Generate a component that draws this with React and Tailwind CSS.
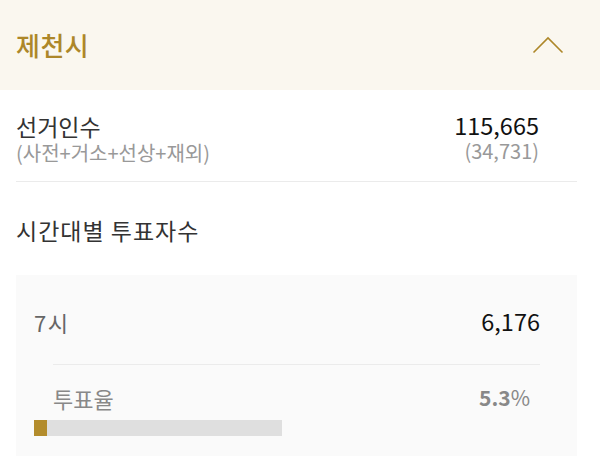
export default function App() {
  const font = { fontFamily: '"Noto Sans CJK KR", "Noto Sans", sans-serif' };
  return (
    <div className="w-[600px] h-[456px] overflow-hidden bg-white" style={font}>
      <div className="h-[90px] bg-[#faf7ef] flex items-center justify-between pl-4 pr-[36px]">
        <span className="text-[26px] font-medium text-[#ad8729] leading-none tracking-[0.5px]">제천시</span>
        <svg width="32" height="18" viewBox="0 0 32 18" fill="none">
          <path d="M1.5 16.5 L16 2 L30.5 16.5" stroke="#ad8729" strokeWidth="1.6" />
        </svg>
      </div>
      <div className="pl-4 pr-[23px]">
        <div className="flex justify-between pt-[21px] pb-[16px] border-b border-[#ebebeb] pr-[38px]">
          <div className="flex flex-col">
            <span className="text-[23px] leading-[30px] text-[#333]">선거인수</span>
            <span className="text-[20px] leading-[24px] text-[#999]">(사전+거소+선상+재외)</span>
          </div>
          <div className="flex flex-col items-end">
            <span className="text-[23.5px] leading-[28px] text-[#111]">115,665</span>
            <span className="text-[20px] leading-[24px] text-[#999]">(34,731)</span>
          </div>
        </div>
        <div className="pt-[33px] pb-[30px]">
          <span className="text-[23px] leading-[30px] text-[#333] tracking-[1px]">시간대별 투표자수</span>
        </div>
        <div className="bg-[#fafafa] h-[200px] pl-[18px] pr-[37px] pt-[32px]">
          <div className="flex justify-between items-center h-[30px]">
            <span className="text-[22px] text-[#666] tracking-[1.5px]">7시</span>
            <span className="text-[23.5px] text-[#111]">6,176</span>
          </div>
          <div className="ml-[19px] mt-[27px] border-t border-[#ebebeb]"></div>
          <div className="ml-[19px] mr-[10px] flex justify-between items-center h-[30px] mt-[18px]">
            <span className="text-[22px] text-[#888]">투표율</span>
            <span className="text-[21px] text-[#888]"><b className="font-bold">5.3</b>%</span>
          </div>
          <div className="mt-[7px] w-[248px] h-[16px] bg-[#dfdfdf]">
            <div className="h-full bg-[#b38c2c]" style={{ width: '5.3%' }}></div>
          </div>
        </div>
      </div>
    </div>
  );
}
